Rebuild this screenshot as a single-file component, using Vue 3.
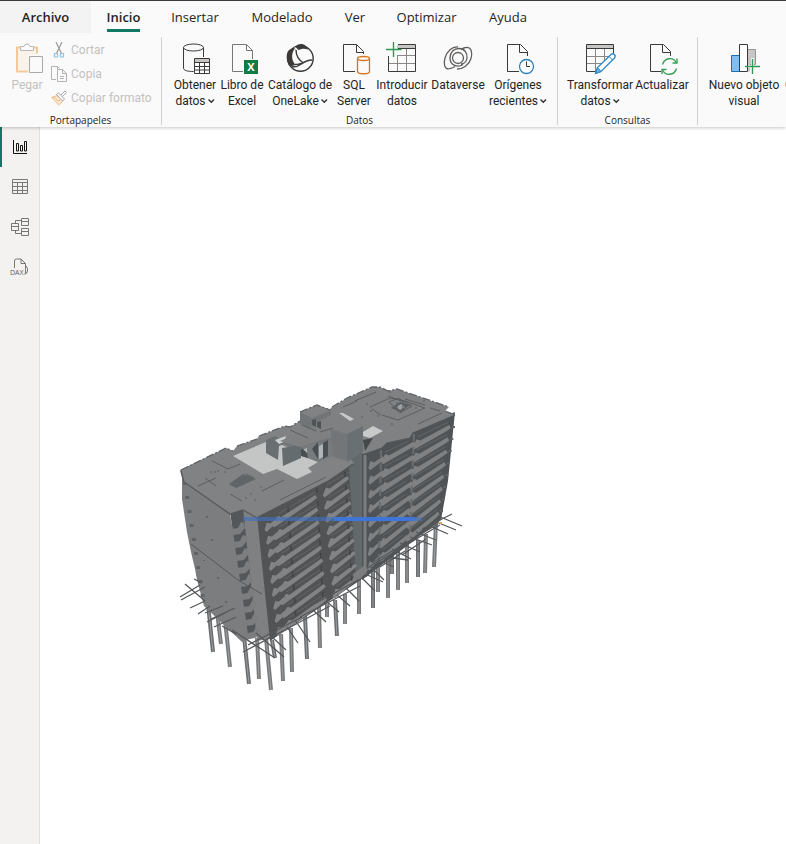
<template>
  <div class="app">
    <header class="ribbon">
      <nav class="tabs" aria-label="Cinta de opciones">
        <button
          v-for="tab in tabs"
          :key="tab"
          type="button"
          class="tab"
          :class="{ file: tab === 'Archivo', active: tab === activeTab }"
          @click="activeTab = tab"
        >
          <span>{{ tab }}</span>
        </button>
      </nav>

      <div class="groups">
        <section class="group clipboard">
          <div class="commands">
            <button type="button" class="command paste" disabled>
              <svg class="icon" viewBox="0 0 32 32">
                <path d="M10 4.500H6V28.500H17M23 4.500h3v6" fill="none" stroke="#f3c99b" stroke-width="2" />
                <path d="M7 6v21h11V12h7V6z" fill="#faf3ea" />
                <path d="M9.500 7.500v-4h3.500q.5-2.500 3-2.500t3 2.500h3.500v4z" fill="#fafafa" stroke="#b9b9b9" />
                <path d="M18.500 13.500h13v16h-13z" fill="#fafafa" stroke="#a9a9a9" />
              </svg>
              <span>Pegar</span>
            </button>
            <div class="small-commands">
              <button type="button" class="small" disabled>
                <svg class="icon-small" viewBox="0 0 16 16" fill="none">
                  <path d="M5 0l5.500 11.500M11 0L5.500 11.500" stroke="#999" stroke-width="1.200" />
                  <path d="M3.500 11.500h3V15h-3zM9.500 11.500h3V15h-3z" stroke="#8fc4e8" stroke-width="1.200" />
                </svg>
                Cortar
              </button>
              <button type="button" class="small" disabled>
                <svg class="icon-small" viewBox="0 0 16 16" fill="none" stroke="#b3b3b3">
                  <path d="M5 13.500H.5V.5h6l2 2M6.500.5V3" />
                  <path d="M6.500 3.500h5l4 4v8h-9zM11.500 3.500v4h4M9 10.500h4M9 12.500h4" />
                </svg>
                Copia
              </button>
              <button type="button" class="small" disabled>
                <svg class="icon-small" viewBox="0 0 16 16" fill="none">
                  <path d="M6 5.500L.7 7.500l7 7.500 4.300-4z" fill="#fbe8d2" stroke="#f0bd88" />
                  <path d="M1 7.500h3l2 3h3" stroke="#f0bd88" />
                  <path d="M5.500 4.500l2-1.500 6 6-2 2zM10 5l4-4 1.500 1.500-4 4" fill="#fafafa" stroke="#a8a8a8" />
                </svg>
                Copiar formato
              </button>
            </div>
          </div>
          <h2>Portapapeles</h2>
        </section>

        <section class="group data">
          <div class="commands">
            <button type="button" class="command w46">
              <svg class="icon" viewBox="0 0 32 32" fill="none" stroke="#3b3a39">
                <ellipse cx="14.500" cy="4.500" rx="10" ry="3.500" />
                <path d="M4.500 4.500V25c0 2.500 4 3.500 10 3.500M24.500 4.500V14" />
                <path d="M15.500 15.500h15v15h-15z" fill="#fff" />
                <path d="M16 16h14v3H16z" fill="#c8c6c4" stroke="none" />
                <path d="M15.500 19.500h15M15.500 23.500h15M15.500 27h15M20.500 19.500v11M25.500 19.500v11" />
              </svg>
              <span>Obtener<br>datos<Chevron /></span>
            </button>
            <button type="button" class="command w48">
              <svg class="icon" viewBox="0 0 32 32" fill="none" stroke="#797775">
                <path d="M17 28.500H6.500v-27h14l6 6V16" />
                <path d="M20.500 1.500v6h6" />
                <path d="M18 17h14v14H18z" fill="#107c41" stroke="none" />
                <text x="25" y="28" class="excel-mark">X</text>
              </svg>
              <span>Libro de<br>Excel</span>
            </button>
            <button type="button" class="command w68">
              <svg class="icon" viewBox="0 0 32 32" fill="none" stroke="#3b3a39">
                <circle cx="16.500" cy="15.500" r="12.700" stroke-width="1.400" />
                <path d="M11.300 5.500C8 8 7.500 14 9 18l2.300 4-5 1.500C2 20 1.500 10 5 7q3-2.500 6.300-1.500z" fill="#3b3a39" stroke="none" />
                <path d="M11.500 4c2-4.500 10.500-4.500 12.500 2.500-4-1.500-7-.5-9.500.5z" fill="#3b3a39" stroke="none" />
                <path d="M12 6.500c0 5 2.500 10.500 7.500 13.500M8 23.500c8 2.500 10-7 20.500-6.500M11 21.500c4 0 6-1.500 8.500-1.500" stroke-width="1.400" />
                <path d="M10.500 4l2.500 3" stroke="#fafafa" stroke-width=".8" />
              </svg>
              <span>Catálogo de<br>OneLake<Chevron /></span>
            </button>
            <button type="button" class="command w40">
              <svg class="icon" viewBox="0 0 32 32" fill="none" stroke="#3b3a39">
                <path d="M17 28.500H5.500v-27h13l7 7V11M18.500 1.500v8h7" />
                <g stroke="#d9721a" stroke-width="1.300" fill="#fafafa">
                  <path d="M19.500 15.500v13c0 3 12 3 12 0v-13" />
                  <ellipse cx="25.500" cy="15.500" rx="6" ry="2" />
                </g>
              </svg>
              <span>SQL<br>Server</span>
            </button>
            <button type="button" class="command w56">
              <svg class="icon" viewBox="0 0 32 32" fill="none" stroke="#3b3a39">
                <path d="M11 2h18v4H11z" fill="#c8c6c4" stroke="none" />
                <path d="M3 20.500h26M11 12.500h18M11.500 12v16M20.500 5.500v23" stroke="#8a8886" />
                <path d="M12 1.500h17.500v27h-27V13M12 5.500h17.500" />
                <path d="M0 6.500h15.500M7.500-1v15" stroke="#2b9a55" stroke-width="1.400" />
              </svg>
              <span>Introducir<br>datos</span>
            </button>
            <button type="button" class="command w56">
              <svg class="icon" viewBox="0 0 32 32" fill="none" stroke="#605e5c" stroke-width="1.300">
                <circle cx="16" cy="15" r="5.500" />
                <path d="M21 21.500c-5 3.500-13 1-13-6.500C8 9 12 5.500 17 5.500c6 0 8.500 5 8 9.500-.5 4-3.500 6-6 6" />
                <path d="M8 25.500C2 27.500 1.500 20 3 15 5 8 10 3.500 16 4M15 26c6 0 12-4 14-10.500 1.500-5 1-11.500-5-11-2 0-3.500 1-4.500 1.800M8 25.500c2 0 3.500-1 5-2" />
              </svg>
              <span>Dataverse</span>
            </button>
            <button type="button" class="command w64">
              <svg class="icon" viewBox="0 0 32 32" fill="none" stroke="#3b3a39">
                <path d="M17 28.500H5.500v-27h13l7 7V13M17.500 1.500v8h8" />
                <circle cx="24.500" cy="23.500" r="7" stroke="#2b7fb8" stroke-width="1.300" fill="#fff" />
                <path d="M24.500 18.500v5H28" />
              </svg>
              <span>Orígenes<br>recientes<Chevron /></span>
            </button>
          </div>
          <h2>Datos</h2>
        </section>

        <section class="group queries">
          <div class="commands">
            <button type="button" class="command w66">
              <svg class="icon" viewBox="0 0 32 32" fill="none" stroke="#3b3a39">
                <path d="M3 2h26v4H3z" fill="#c8c6c4" stroke="none" />
                <path d="M3 13.500h26M3 20.500h18M11.500 6v22M20.500 6v16" stroke="#8a8886" />
                <path d="M12 28.500H2.500v-27h27v9M2.500 5.500h27" />
                <path d="M11.500 30.500l2-6L27 11.500c2.500-2 5.500 1 3.500 3.500L17 28.500z" fill="#fff" stroke="#2b88c8" stroke-width="1.300" />
                <path d="M11.500 30.500l2-6 3.500 4z" fill="#5fb2ea" stroke="#2b88c8" />
                <path d="M25 13.500l3.500 3.500" stroke="#2b88c8" />
              </svg>
              <span>Transformar<br>datos<Chevron /></span>
            </button>
            <button type="button" class="command w58">
              <svg class="icon" viewBox="0 0 32 32" fill="none" stroke="#3b3a39">
                <path d="M15 28.500H4.500v-27h13l7 7V13M16.500 1.500v8h8" />
                <g stroke="#3a9e56" stroke-width="1.400">
                  <path d="M16.500 21.500c2-7 11-8 14-1.500M30.500 25.500c-2 7-11 8-14 1.500" />
                  <path d="M31 15.500V20h-4.500M16 31v-4.500h4.500" />
                </g>
              </svg>
              <span>Actualizar</span>
            </button>
          </div>
          <h2>Consultas</h2>
        </section>

        <section class="group insert">
          <div class="commands">
            <button type="button" class="command w74">
              <svg class="icon" viewBox="0 0 32 32" fill="none">
                <path d="M3.500 12.500h8v16h-8z" fill="#83bdeb" stroke="#1c6fb5" />
                <path d="M19.500 6.500h8v15h-8z" fill="#c8c6c4" stroke="#979593" />
                <path d="M19.500 21v7.500H22V21z" fill="#c8c6c4" />
                <path d="M11.500 1.500h8v27h-8z" fill="#fff" stroke="#3b3a39" />
                <path d="M20 23.500h12M24.500 15v16" stroke="#fafafa" stroke-width="3" />
                <path d="M17 23.500h15M24.500 16v15" stroke="#2b9a55" stroke-width="1.400" />
              </svg>
              <span>Nuevo objeto<br>visual</span>
            </button>
            <button type="button" class="command next"><span>C</span></button>
          </div>
        </section>
      </div>
    </header>

    <div class="workspace">
      <aside class="views">
        <button type="button" class="view active" aria-label="Vista de informe">
          <svg viewBox="0 0 20 20" stroke="#111">
            <path d="M3.500 3v13.500H17M6.500 6.500h2V14h-2zM10.500 8.500h2V14h-2zM14.500 4.500h2V14h-2z" />
          </svg>
        </button>
        <button type="button" class="view" aria-label="Vista de tabla">
          <svg viewBox="0 0 20 20">
            <path d="M2.500 2.500h15v14h-15zM2.500 5.500h15M2.500 9.500h15M2.500 13.500h15M7.500 5.500v11M12.500 5.500v11" />
          </svg>
        </button>
        <button type="button" class="view" aria-label="Vista de modelo">
          <svg viewBox="0 0 20 20">
            <path d="M1.500 6.500h7v7h-7zM1.500 9.500h7M11.500 1.500h7v7h-7zM11.500 4.500h7M11.500 11.500h7v7h-7zM11.500 14.500h7" />
            <path d="M5.500 6.500v-3h6M5.500 13.500v3h6" />
          </svg>
        </button>
        <button type="button" class="view" aria-label="Vista de consultas DAX">
          <svg viewBox="0 0 20 20">
            <path d="M4.500 11V4q0-2 2-2H11l4.500 4.500V16q0 1.500-2 1.500M11 2v4.500h4.500M16 9q2 2 1.500 5T15 17" />
            <text x="0" y="18" class="dax-mark">DAX</text>
          </svg>
        </button>
      </aside>

      <main class="canvas">
        <svg class="building" viewBox="170 380 300 320" role="img" aria-label="Edificio">
          <!-- pilotes -->
          <g fill="none" stroke-width="4">
            <path v-for="(p, i) in piles" :key="i" :d="pilePath(p)" :stroke="i % 3 ? '#77797b' : '#696d70'" />
          </g>
          <g fill="none" stroke="#9a9c9e" stroke-width="1">
            <path v-for="(p, i) in piles" :key="i" :d="pilePath(p)" />
          </g>

          <!-- muro lateral y fachadas -->
          <path d="M182 477l48 37 22 124-10 4-38-36-7-26-2-11-4-17-4-20-5-33z" fill="#7b7d7f" />
          <path d="M230 512l16-4 18 126-16 0z" fill="#54575a" />
          <path d="M243 508l17 5 14 125-17 3z" fill="#7e8082" />
          <path d="M257 516L354 460L362 579L270 641Z" fill="#515355" />
          <path d="M348 452l20 0 0 124-12 4z" fill="#63686a" />
          <path d="M362 450L455 412L448 481L441 520L362 580Z" fill="#505355" />

          <path :d="sideBalconies" fill="#7b7d7f" />
          <path :d="underShadow" fill="none" stroke="#636668" stroke-width="1" />
          <path :d="leftFloors" fill="#818385" />
          <path :d="rightFloors" fill="#7e8082" />
          <path d="M317 488l6 112M288 507l8 112M345 472l7 113" stroke="#414447" stroke-width="1.500" stroke-dasharray="5 8" fill="none" />
          <path d="M381 450l-2 112M414 434l-4 100" stroke="#6a6d6f" stroke-width="2" stroke-dasharray="7 6" fill="none" />
          <path d="M365 455v120" stroke="#7b7d7f" stroke-width="3" fill="none" />
          <path :d="edgeKnobs" fill="#606365" />
          <path d="M191 544l47 36 24 14" stroke="#56595b" fill="none" />
          <path d="M207 516v2M218 577v2M212 539v2M204 560v1M226 601v2" stroke="#484b4d" />

          <!-- cubierta -->
          <path :d="poly(roofRight)" fill="#7f8183" />
          <path :d="poly(roofLeft)" fill="#808284" />
          <path d="M181 471L184 482L230 514L243 510L257 518L329 481L353 464" fill="none" stroke="#54575a" stroke-width="1.200" />
          <path d="M455 415L435 424L413 433L410 438L387 443L382 448L363 455" fill="none" stroke="#54575a" stroke-width="1.200" />
          <path d="M300 412L317 405L331 410L331 424L312 431L300 424Z" fill="#727577" />
          <path d="M300 412L317 405L331 410L312 418Z" fill="#808284" />
          <path d="M233 456L266 442L282 445L318 462L308 468L312 472L297 479L277 469L263 474Z" fill="#c4c6c5" />
          <path d="M280 442L304 431L334 439L334 450L302 448L290 447Z" fill="#737678" />
          <path d="M266 440L275 436L286 443L279 446L278 460L266 453Z" fill="#6a6f72" />
          <path d="M275 440L286 436L284 442L279 444Z" fill="#cdd0d0" />
          <path d="M282 448L301 445L301 458L283 466Z" fill="#656c70" />
          <path d="M302 446L334 440L334 456L318 462L302 456Z" fill="#787b7d" />
          <path d="M301 449l5-1 2 10-7-2zM312 449l6-7v17zM323 443l5-3v16l-5 3z" fill="#484e51" />
          <path d="M319 446l4-2v13l-4 2zM303 449l4-1v5z" fill="#aeb6ba" />
          <path d="M280 441L312 427L334 436L300 447Z" fill="#7e8082" />
          <path d="M311 425L335 413L363 425L347 434L330 430L324 435Z" fill="#7e8082" />
          <path d="M312 420l4-1v8l-4-2zM317 422l4-1v8l-4-2z" fill="#4f5457" />
          <path d="M330 429L347 434L347 461L334 457Z" fill="#727678" />
          <path d="M347 434L363 426L363 452L347 462Z" fill="#697073" />
          <path d="M339 413L343 413L354 419L350 421ZM363 432L373 426L383 431L370 438L363 436Z" fill="#c8caca" />
          <path d="M363 440L373 438L365 451Z" fill="#44484b" />
          <path d="M229 484L243 474L256 479L236 488Z" fill="#606568" />
          <path d="M391 408L400 402L410 405L401 412Z" fill="#595e61" />
          <path d="M396 407l5-3 4 3-5 3z" fill="#9da1a2" />
          <path :d="roofLines" fill="none" stroke="#5c5f61" stroke-width="1" />
          <path :d="roofRim" stroke="#616466" stroke-dasharray="8 2 2 2" fill="none" stroke-width="1.300" />

          <!-- vigas de cimentación -->
          <path :d="beams" fill="none" stroke="#55585a" stroke-width="1.300" />
          <path d="M353 574l12-9 3 5-8 9-6 1z" fill="#7b7d7f" />
          <path d="M440 522h2v2h-2z" fill="#e8a35a" />

          <!-- barra de carga -->
          <path d="M243 517h91v4h-91z" fill="#406fbd" opacity=".65" />
          <path d="M334 517h81v4h-81z" fill="#3f75d6" />
          <path d="M415 517h7v4h-7z" fill="#406fbd" opacity=".6" />
        </svg>
      </main>
    </div>
  </div>
</template>

<script setup>
import { ref, h } from 'vue'

const tabs = ['Archivo', 'Inicio', 'Insertar', 'Modelado', 'Ver', 'Optimizar', 'Ayuda']
const activeTab = ref('Inicio')

// Flecha de los botones con menú
function Chevron() {
  return h('svg', { viewBox: '0 0 9 8', width: 9, height: 8, fill: 'none' }, [
    h('path', { d: 'M2.500 2.500L5.300 5.300L8 2.500', stroke: '#333', 'stroke-width': 1.4 }),
  ])
}

// x arriba, y arriba, x abajo, y abajo
const piles = [
  [208, 604, 213, 652], [217, 612, 221, 644], [225, 620, 230, 667],
  [244, 636, 249, 684], [257, 638, 259, 679], [266, 638, 271, 690],
  [272, 640, 275, 658], [281, 634, 283, 681], [291, 628, 292, 672],
  [305, 616, 307, 659], [319, 606, 320, 648], [327, 604, 327, 617],
  [335, 600, 337, 636], [345, 594, 345, 624], [359, 574, 359, 614],
  [373, 560, 373, 608], [378, 560, 378, 592], [388, 558, 388, 598],
  [392, 554, 392, 574], [398, 550, 398, 590], [407, 544, 407, 583],
  [418, 540, 418, 577], [426, 534, 425, 573], [436, 522, 434, 567],
]

const roofLeft = [
  [180, 470], [226, 448], [233, 451], [237, 446], [257, 439], [259, 436], [285, 426],
  [290, 427], [300, 421], [318, 414], [350, 420], [363, 430], [350, 458], [354, 463],
  [329, 480], [257, 517], [243, 510], [230, 514], [183, 482],
]
const roofRight = [
  [332, 407], [336, 405], [347, 398], [354, 395], [372, 387], [380, 387], [388, 391],
  [397, 389], [449, 407], [445, 411], [455, 415], [435, 423], [413, 433], [410, 438],
  [387, 443], [382, 448], [363, 454], [348, 440], [325, 414],
]

function poly(points) {
  return 'M' + points.map(p => p.join(' ')).join('L') + 'Z'
}

function pilePath([x1, y1, x2, y2]) {
  return `M${x1} ${y1}L${x2} ${y2}`
}

// Punto de una fachada: u avanza a lo largo, v baja de la cubierta al suelo
function facade(tl, tr, bl, br) {
  return (u, v, dy = 0) => {
    const x = (tl[0] * (1 - u) + tr[0] * u) * (1 - v) + (bl[0] * (1 - u) + br[0] * u) * v
    const y = (tl[1] * (1 - u) + tr[1] * u) * (1 - v) + (bl[1] * (1 - u) + br[1] * u) * v
    return `${x.toFixed(1)} ${(y + dy).toFixed(1)}`
  }
}

const left = facade([258, 522], [352, 467], [271, 640], [362, 579])
const right = facade([363, 457], [455, 416], [363, 579], [441, 519])

function slab(at, u1, u2, v) {
  const m = u1 + (u2 - u1) * 0.12
  return `M${at(u1, v, 2)}L${at(m, v, -4)}L${at(m + 0.04, v, -1)}L${at(u2 - 0.02, v, -3)}L${at(u2, v, 1)}L${at(u2 - 0.05, v, 2)}L${at(m, v, 5)}L${at(u1 + 0.02, v, 5)}Z`
}

let leftFloors = ''
let rightFloors = ''
let underShadow = ''
let edgeKnobs = ''
let sideBalconies = ''
for (let i = 0; i < 9; i++) {
  const v = (i + 0.7) / 9
  leftFloors += slab(left, 0.06, 0.24, v) + slab(left, 0.14, 0.62, v) + slab(left, 0.68, 0.96, v)
  underShadow += `M${left(0.2, v, -6)}L${left(0.6, v, -6)}M${left(0.72, v, -6)}L${left(0.98, v, -6)}`
  const x = 232 + i * 1.9
  const y = 524 + i * 13
  sideBalconies += `M${x} ${y + 5}l6-1 3-6 3 1 1 5-5 6-7 1z`
  edgeKnobs += `M${183 + i * 2.2} ${482 + i * 14}h4v3h-4z`
}
for (let i = 0; i < 8; i++) {
  const v = (i + 0.8) / 8.4
  rightFloors += slab(right, 0.06, 0.24, v) + slab(right, 0.2, 0.58, v) + slab(right, 0.54, 0.97, v)
  underShadow += `M${right(0.24, v, -6)}L${right(0.5, v, -6)}M${right(0.6, v, -6)}L${right(0.94, v, -6)}`
  edgeKnobs += `M${452 - i * 1.7} ${426 + i * 12}h3v2h-3z`
}

const roofLines = [
  'M212 461l16 8 12-5M205 478l11 8M230 494l12 7M262 491l22-11M280 500l24-12 22-11',
  'M198 486l18-8M214 472h2M246 474l8 4M250 494h2M245 498h2M254 500h2M260 487h2',
  'M370 407l20-9 15 3 20 7-27 12-16-5M372 409l9 6M389 402l9-4 14 8-12 7z',
  'M355 401l21-9M388 396l16 6M405 399l20 6M430 408l10 3M418 424l24-11M343 407l14-6',
  'M361 417h2M370 411h2M377 416h2M366 404h2M389 392h2M415 408h2M423 401h2M391 424h2',
  'M290 430l18 8M302 425l14 6M320 432l13-4M210 472h2M217 471h2M224 472h2M397 402v9M403 403v7',
].join('')

const roofRim = [
  'M181 470L226 448L233 451M237 446L257 439M259 436L285 426L290 427L300 421',
  'M332 407L347 398L372 387L380 387L388 391L397 389L449 407M445 411L455 415M300 412L317 405L330 410',
].join('')

const beams = [
  'M180 597l20-12M181 600l24-13M185 584l20 17M190 608l15-7M198 614l12-8M194 579l8 4',
  'M205 613l18-7M207 622l20-10M211 619l24-11M214 627l22-10M232 630l43 28M222 626l14 8',
  'M243 652l57-30 30-16M248 645l54-28M256 633l28 24M270 635l16 15M287 627l11 16M295 620l15 22',
  'M314 611l12 11M326 601l13 11M337 595l13 11M346 588l13 13M361 577l14 14M363 573l20 9',
  'M370 566l14 14M378 560l16 7M386 557l22 3M392 549l19 10M400 543l20 9M410 537l22 8M416 532l20 8',
  'M300 617l60-31M364 570l76-45M372 563l66-39M422 529l30-15M438 516l24 10M434 521l22 9M430 526l18 8',
  'M305 609l55-30M380 567l25-16M402 555l24-16',
].join('')
</script>

<style>
body {
  margin: 0;
  background: #fff;
}
</style>

<style scoped>
.app {
  display: flex;
  flex-direction: column;
  min-height: 100vh;
  overflow: hidden;
  font-family: "Segoe UI", "Open Sans", "Noto Sans", sans-serif;
  color: #252423;
}
button {
  margin: 0;
  padding: 0;
  border: 0;
  background: none;
  font: inherit;
  color: inherit;
}
.ribbon {
  z-index: 1;
  border-top: 1px solid #3b3a3f;
  background: #fafafa;
  box-shadow: 0 1px 3px rgba(0, 0, 0, 0.22);
}
.tabs {
  display: grid;
  grid-template-columns: 91px 65px 78px 96px 50px 93px 70px;
  height: 31px;
  font-size: 13px;
  line-height: 32px;
}
.tab {
  display: flex;
  justify-content: center;
  white-space: nowrap;
}
.tab.file {
  background: #f3f3f3;
  font-weight: 600;
}
.tab.active {
  font-weight: 600;
}
.tab.active span {
  height: 28px;
  border-bottom: 3px solid #117865;
}
.groups {
  display: flex;
  padding: 5px 0 2px;
}
.group {
  display: flex;
  flex: none;
  flex-direction: column;
  box-sizing: border-box;
  height: 88px;
  border-right: 1px solid #d2d0ce;
}
.clipboard {
  width: 162px;
}
.data {
  width: 396px;
}
.queries {
  width: 140px;
}
.insert {
  border-right: 0;
}
.data .commands {
  padding-left: 10px;
}
.queries .commands,
.insert .commands {
  padding-left: 9px;
}
.commands {
  display: flex;
  flex: 1;
}
.group h2 {
  margin: 0;
  font-size: 10px;
  font-weight: 400;
  line-height: 10px;
  text-align: center;
}
.command {
  display: flex;
  flex: none;
  flex-direction: column;
  align-items: center;
  padding-top: 6px;
  font-family: "Segoe UI", Roboto, "Open Sans", sans-serif;
  font-size: 12px;
  line-height: 16px;
  white-space: nowrap;
}
.command > span {
  margin-top: 2px;
}
.icon {
  flex: none;
  width: 32px;
  height: 32px;
  overflow: visible;
}
.w40 { width: 40px; }
.w46 { width: 46px; }
.w48 { width: 48px; }
.w56 { width: 56px; }
.w58 { width: 58px; }
.w64 { width: 64px; }
.w66 { width: 66px; }
.w68 { width: 68px; }
.w74 { width: 74px; }
.next {
  padding: 38px 0 0 4px;
}
.paste {
  width: 51px;
  padding-left: 3px;
  color: #c3c1bf;
}
.small-commands {
  display: flex;
  flex-direction: column;
  padding-top: 1px;
}
.small {
  display: flex;
  align-items: center;
  gap: 4px;
  height: 24px;
  font-family: "Segoe UI", Roboto, "Open Sans", sans-serif;
  font-size: 12px;
  color: #c3c1bf;
  white-space: nowrap;
}
.icon-small {
  width: 16px;
  height: 16px;
}
.excel-mark {
  fill: #fff;
  stroke: none;
  font: 700 11px "Open Sans", sans-serif;
  text-anchor: middle;
}
.dax-mark {
  fill: #605e5c;
  stroke: #f3f2f1;
  stroke-width: 2px;
  paint-order: stroke;
  font: 7px "Open Sans", sans-serif;
}
.workspace {
  display: flex;
  flex: 1;
}
.views {
  display: flex;
  flex: none;
  flex-direction: column;
  box-sizing: border-box;
  width: 40px;
  border-right: 1px solid #e1dfdd;
  background: #f3f2f1;
}
.view {
  display: flex;
  align-items: center;
  justify-content: center;
  height: 40px;
  border-left: 2px solid transparent;
  border-right: 1px solid transparent;
}
.view.active {
  border-left-color: #117865;
}
.view svg {
  width: 20px;
  height: 20px;
  overflow: visible;
  fill: none;
}
.view:not(.active) svg {
  stroke: #797775;
}
.canvas {
  flex: 1;
  min-width: 0;
  padding: 253px 0 0 130px;
}
.building {
  display: block;
  width: 300px;
  height: 320px;
}
</style>
